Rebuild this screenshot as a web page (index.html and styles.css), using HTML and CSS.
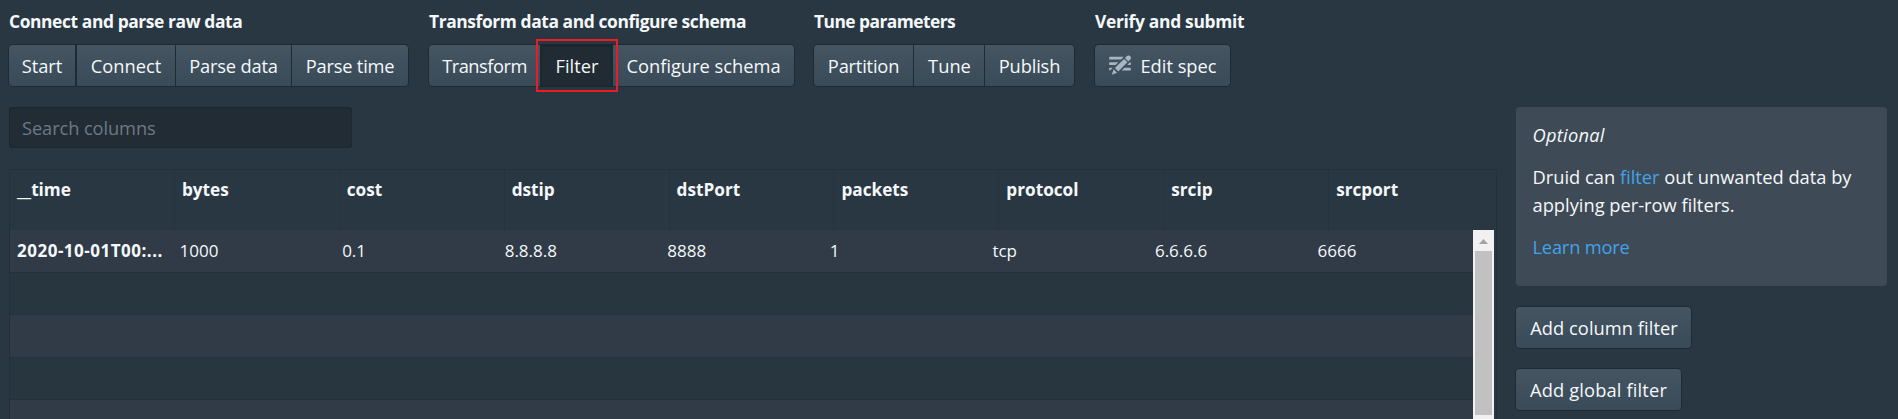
FILE: index.html
```html
<!DOCTYPE html>
<html lang="en">
<head>
<meta charset="utf-8">
<title>Load data</title>
<link rel="stylesheet" href="styles.css">
</head>
<body>
<div class="view">
  <nav class="steps">
    <section class="group group-connect">
      <h2 class="group-title">Connect and parse raw data</h2>
      <div class="buttons">
        <button class="btn w-start">Start</button>
        <button class="btn w-connect">Connect</button>
        <button class="btn w-parse-data tight">Parse data</button>
        <button class="btn w-parse-time tight">Parse time</button>
      </div>
    </section>
    <section class="group group-transform">
      <h2 class="group-title">Transform data and configure schema</h2>
      <div class="buttons">
        <button class="btn w-transform tighter">Transform</button>
        <button class="btn w-filter active">Filter<span class="highlight"></span></button>
        <button class="btn w-schema">Configure schema</button>
      </div>
    </section>
    <section class="group group-tune">
      <h2 class="group-title title-tune">Tune parameters</h2>
      <div class="buttons">
        <button class="btn w-partition tight">Partition</button>
        <button class="btn w-tune">Tune</button>
        <button class="btn w-publish">Publish</button>
      </div>
    </section>
    <section class="group">
      <h2 class="group-title title-verify">Verify and submit</h2>
      <div class="buttons">
        <button class="btn w-edit">
          <svg class="icon" viewBox="0 0 16 16"><path d="M1 8h3.76l2-2H1c-.55 0-1 .45-1 1s.45 1 1 1zm14.49-4.01c.31-.32.51-.76.51-1.24C16 1.78 15.22 1 14.25 1c-.48 0-.92.2-1.24.51l-1.44 1.44 2.47 2.47 1.45-1.43zM1 4h7.76l2-2H1c-.55 0-1 .45-1 1s.45 1 1 1zm0 6c-.55 0-1 .45-1 1 0 .48.35.86.8.96L2.76 10H1zm9.95-6.43l-6.69 6.69 2.47 2.47 6.69-6.69-2.47-2.47zm4.25 2.47L13.24 8H15c.55 0 1-.45 1-1 0-.48-.35-.86-.8-.96zM2 15l3.86-1.39-2.46-2.44L2 15zm13-5h-3.76l-2 2H15c.55 0 1-.45 1-1s-.45-1-1-1z"/></svg>
          <span>Edit spec</span>
        </button>
      </div>
    </section>
  </nav>
  <div class="content">
    <main class="main">
      <input class="search" type="text" placeholder="Search columns">
      <div class="table">
        <div class="thead">
          <div class="th">__time</div><div class="th">bytes</div><div class="th">cost</div><div class="th">dstip</div><div class="th">dstPort</div><div class="th">packets</div><div class="th">protocol</div><div class="th">srcip</div><div class="th">srcport</div>
        </div>
        <div class="tbody">
          <div class="rows">
            <div class="row">
              <div class="td time">2020-10-01T00:...</div><div class="td">1000</div><div class="td">0.1</div><div class="td">8.8.8.8</div><div class="td">8888</div><div class="td">1</div><div class="td">tcp</div><div class="td">6.6.6.6</div><div class="td">6666</div>
            </div>
            <div class="row"></div>
            <div class="row"></div>
            <div class="row"></div>
            <div class="row"></div>
          </div>
          <div class="scrollbar">
            <svg class="arrow" viewBox="0 0 9 5"><path d="M4.500 0L9 5H0z"/></svg>
            <div class="thumb"></div>
          </div>
        </div>
      </div>
    </main>
    <aside class="side">
      <div class="callout">
        <p class="optional">Optional</p>
        <p>Druid can <a class="link">filter</a> out unwanted data by<br>applying per-row filters.</p>
        <p><a class="link more">Learn more</a></p>
      </div>
      <button class="btn solo w-column">Add column filter</button>
      <button class="btn solo w-global">Add global filter</button>
    </aside>
  </div>
</div>
</body>
</html>
```
FILE: styles.css
```css
* { box-sizing: border-box; }
body {
  margin: 0;
  background: #293742;
  color: #f5f8fa;
  font: 18.3px/28px "Open Sans", "Noto Sans", sans-serif;
  overflow: hidden;
}
.view { height: 419px; overflow: hidden; padding-left: 9px; }

.steps { display: flex; height: 107px; padding-top: 7px; }
.group { flex: none; }
.group-connect { width: 420px; }
.group-transform { width: 385px; }
.group-tune { width: 281px; }
.group-title {
  margin: 0 0 10px;
  font-size: 17.4px;
  font-weight: 700;
  line-height: 28px;
  letter-spacing: -0.4px;
  white-space: nowrap;
}
.title-tune { letter-spacing: -0.55px; }
.title-verify { letter-spacing: -0.3px; }
.buttons { display: flex; gap: 1px; }

.btn {
  flex: none;
  position: relative;
  display: flex;
  align-items: center;
  justify-content: center;
  height: 41px;
  margin: 0;
  padding: 0;
  border: 0;
  color: #f5f8fa;
  font: inherit;
  white-space: nowrap;
  background: linear-gradient(#455562, #394a58);
  box-shadow: 0 0 0 1px #1f2b34;
}
.btn:first-child { border-radius: 4px 0 0 4px; }
.btn:last-child { border-radius: 0 4px 4px 0; }
.btn:only-child, .btn.solo { border-radius: 4px; }
.tight { letter-spacing: -0.2px; }
.tighter { letter-spacing: -0.5px; }
.btn.active { background: #202b33; box-shadow: inset 0 1px 2px rgba(16, 22, 26, .4), 0 0 0 1px #1c272f; }
.highlight {
  position: absolute;
  z-index: 2;
  inset: -6px -6px -6px -5px;
  border: 2px solid #ed1c24;
}
.btn.active { z-index: 2; }

.w-start { width: 66px; margin-right: 1px; }
.w-connect { width: 98px; }
.w-parse-data { width: 115px; }
.w-parse-time { width: 116px; }
.w-transform { width: 111px; }
.w-filter { width: 71px; padding-left: 1px; }
.w-schema { width: 181px; }
.w-partition { width: 99px; }
.w-tune { width: 70px; padding-left: 1px; }
.w-publish { width: 89px; letter-spacing: -0.15px; }
.w-edit { width: 135px; gap: 9px; padding-left: 1px; }
.w-column { width: 175px; letter-spacing: .05px; margin-bottom: 21px; padding-left: 1px; }
.w-global { width: 165px; letter-spacing: .15px; }
.icon { width: 22px; height: 22px; margin-bottom: 2px; fill: #a7b6c2; }

.content { display: flex; height: 312px; }
.main { width: 1488px; }
.search {
  display: block;
  width: 343px;
  height: 41px;
  margin: 0 0 21px;
  padding: 0 13px 1px;
  border: 0;
  border-radius: 4px;
  background: #222c34;
  box-shadow: inset 0 0 0 1px #1d272f, inset 0 1px 1px #1a232a;
  color: #f5f8fa;
  font: inherit;
}
.search::placeholder { color: #6c7a86; opacity: 1; letter-spacing: -0.1px; }

.table {
  height: 250px;
  border: 1px solid #24313b;
  border-bottom: 0;
}
.thead { display: flex; height: 60px; }
.th {
  width: 164.9px;
  padding: 6px 0 0 7px;
  border-right: 1px solid #26333d;
  font-size: 17.2px;
  font-weight: 700;
  line-height: 28px;
}
.th:last-child { border-right: 0; }
.tbody { display: flex; height: 189px; }
.rows { width: 1463px; background: #283640; }
.row {
  display: flex;
  height: 42.5px;
  border-bottom: 1.5px solid #25323c;
}
.row:nth-child(odd) { background: #303b47; }
.td {
  width: 162.6px;
  padding: 7px 0 0 7px;
  font-size: 17px;
  line-height: 28px;
}
.time { font-weight: 700; letter-spacing: .5px; white-space: nowrap; }
.scrollbar {
  width: 21px;
  background: #f1f1f1;
}
.arrow { display: block; width: 9px; height: 5px; margin: 9px auto 7px; fill: #a3a3a3; }
.thumb { width: 17px; height: 164px; margin: 0 auto; background: #c1c1c1; }

.side { padding-left: 19px; }
.callout {
  width: 371px;
  height: 179px;
  margin-bottom: 21px;
  padding: 14px 17px 14px 16.500px;
  border-radius: 4px;
  background: #3e4a55;
}
.callout p { margin: 0 0 14px; white-space: nowrap; }
.optional { font-style: italic; letter-spacing: .25px; }
.link { color: #43a3ea; }
.more { letter-spacing: -0.2px; }
```
